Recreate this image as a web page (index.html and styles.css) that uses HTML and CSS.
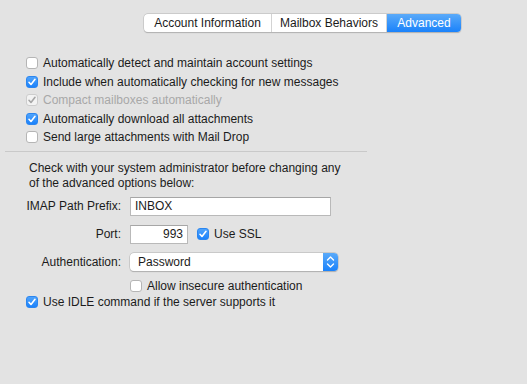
FILE: index.html
```html
<!DOCTYPE html>
<html>
<head>
<meta charset="utf-8">
<link rel="stylesheet" href="styles.css">
</head>
<body>
<div class="pane">
  <div class="tabs">
    <div class="tab tab-account">Account Information</div>
    <div class="tab tab-mailbox">Mailbox Behaviors</div>
    <div class="tab tab-adv active">Advanced</div>
  </div>

  <div class="checks">
    <div class="row"><span class="cb"></span><span>Automatically detect and maintain account settings</span></div>
    <div class="row"><span class="cb on"><svg viewBox="0 0 12 12"><path d="M3 6.3 L5 8.5 L9 3.3" /></svg></span><span>Include when automatically checking for new messages</span></div>
    <div class="row dis"><span class="cb off-on"><svg viewBox="0 0 12 12"><path d="M3 6.3 L5 8.5 L9 3.3" /></svg></span><span>Compact mailboxes automatically</span></div>
    <div class="row"><span class="cb on"><svg viewBox="0 0 12 12"><path d="M3 6.3 L5 8.5 L9 3.3" /></svg></span><span>Automatically download all attachments</span></div>
    <div class="row"><span class="cb"></span><span>Send large attachments with Mail Drop</span></div>
  </div>

  <div class="sep"></div>

  <p class="note">Check with your system administrator before changing any<br>of the advanced options below:</p>

  <div class="form">
    <div class="frow r-prefix">
      <label class="lbl">IMAP Path Prefix:</label>
      <div class="field prefix">INBOX</div>
    </div>
    <div class="frow r-port">
      <label class="lbl">Port:</label>
      <div class="field port">993</div>
      <span class="cb on"><svg viewBox="0 0 12 12"><path d="M3 6.3 L5 8.5 L9 3.3" /></svg></span><span class="ssl">Use SSL</span>
    </div>
    <div class="frow r-auth">
      <label class="lbl">Authentication:</label>
      <div class="popup"><span class="ptext">Password</span><span class="stepper"><svg viewBox="0 0 15 18"><path d="M4.5 7 L7.5 4 L10.5 7 M4.5 11 L7.5 14 L10.5 11" /></svg></span></div>
    </div>
    <div class="frow r-insecure">
      <span class="lbl"></span>
      <span class="cb"></span><span>Allow insecure authentication</span>
    </div>
  </div>
  <div class="row idle"><span class="cb on"><svg viewBox="0 0 12 12"><path d="M3 6.3 L5 8.5 L9 3.3" /></svg></span><span>Use IDLE command if the server supports it</span></div>
</div>
</body>
</html>
```
FILE: styles.css
```css
html, body {
  margin: 0;
  padding: 0;
  background: #e3e3e3;
}
body {
  width: 527px;
  height: 384px;
  overflow: hidden;
  font-family: "Liberation Sans", Arial, sans-serif;
  font-size: 12px;
  color: #1b1b1b;
}
.pane {
  padding-top: 14px;
}
.tabs {
  display: flex;
  margin-left: 144px;
  width: 317px;
  height: 18px;
  box-sizing: border-box;
  border-radius: 4px;
  background: #fff;
  box-shadow: 0 0 0 0.5px #b9b9b9, 0 0.5px 1px rgba(0,0,0,0.25);
  overflow: hidden;
}
.tab {
  display: flex;
  align-items: center;
  justify-content: center;
  height: 18px;
  font-size: 12px;
  color: #1b1b1b;
  border-right: 1px solid #d3d3d3;
  box-sizing: border-box;
}
.tab-account { width: 128px; }
.tab-mailbox { width: 115px; }
.tab-adv { width: 74px; border-right: none; }
.tab.active {
  background: linear-gradient(#5aaaf9, #1a82fb);
  color: #fff;
}
.checks {
  margin-top: 22px;
  padding-left: 26px;
}
.row {
  display: flex;
  align-items: center;
  height: 18.5px;
  gap: 5px;
}
.row.dis { color: #a8a8a8; }
.cb {
  width: 12px;
  height: 12px;
  box-sizing: border-box;
  border: 1px solid #b5b5b5;
  border-radius: 3px;
  background: #fff;
  flex: none;
  display: inline-flex;
}
.cb svg { width: 12px; height: 12px; margin: -1px; }
.cb svg path {
  fill: none;
  stroke: #fff;
  stroke-width: 1.6;
  stroke-linecap: round;
  stroke-linejoin: round;
}
.cb.on {
  background: linear-gradient(#4fa3fb, #1b82fb);
  border-color: #2b86f0;
}
.cb.off-on {
  background: #f3f3f3;
  border-color: #cdcdcd;
}
.cb.off-on svg path { stroke: #a6a6a6; }
.sep {
  margin: 4px 160px 0 5px;
  height: 1px;
  background: #c9c9c9;
}
.note {
  margin: 9px 0 0 29px;
  line-height: 15px;
}
.form {
  margin-top: 6px;
}
.frow {
  display: flex;
  align-items: center;
}
.lbl {
  width: 121px;
  text-align: right;
  flex: none;
  margin-right: 9px;
}
.field {
  height: 19px;
  box-sizing: border-box;
  background: #fff;
  border: 1px solid #b9b9b9;
  border-top-color: #a6a6a6;
  display: flex;
  align-items: center;
  padding: 0 4px;
}
.prefix { width: 201px; }
.r-port { margin-top: 9px; }
.port {
  width: 58px;
  height: 19px;
  justify-content: flex-end;
}
.r-port .cb { margin-left: 9px; margin-right: 5px; }
.r-auth { margin-top: 9px; }
.popup {
  width: 208px;
  height: 18px;
  box-sizing: border-box;
  border-radius: 4px;
  background: #fff;
  box-shadow: 0 0 0 0.5px #b5b5b5, 0 0.5px 1px rgba(0,0,0,0.25);
  display: flex;
  align-items: center;
  overflow: hidden;
}
.ptext { flex: 1; padding-left: 8px; }
.stepper {
  width: 15px;
  height: 18px;
  background: linear-gradient(#5aaaf9, #1a82fb);
  display: flex;
}
.stepper svg { width: 15px; height: 18px; }
.stepper svg path {
  fill: none;
  stroke: #fff;
  stroke-width: 1.4;
  stroke-linecap: round;
  stroke-linejoin: round;
}
.r-insecure { margin-top: 8px; }
.r-insecure .cb { margin-right: 5px; }
.idle {
  margin-top: 0px;
  padding-left: 26px;
}
```
